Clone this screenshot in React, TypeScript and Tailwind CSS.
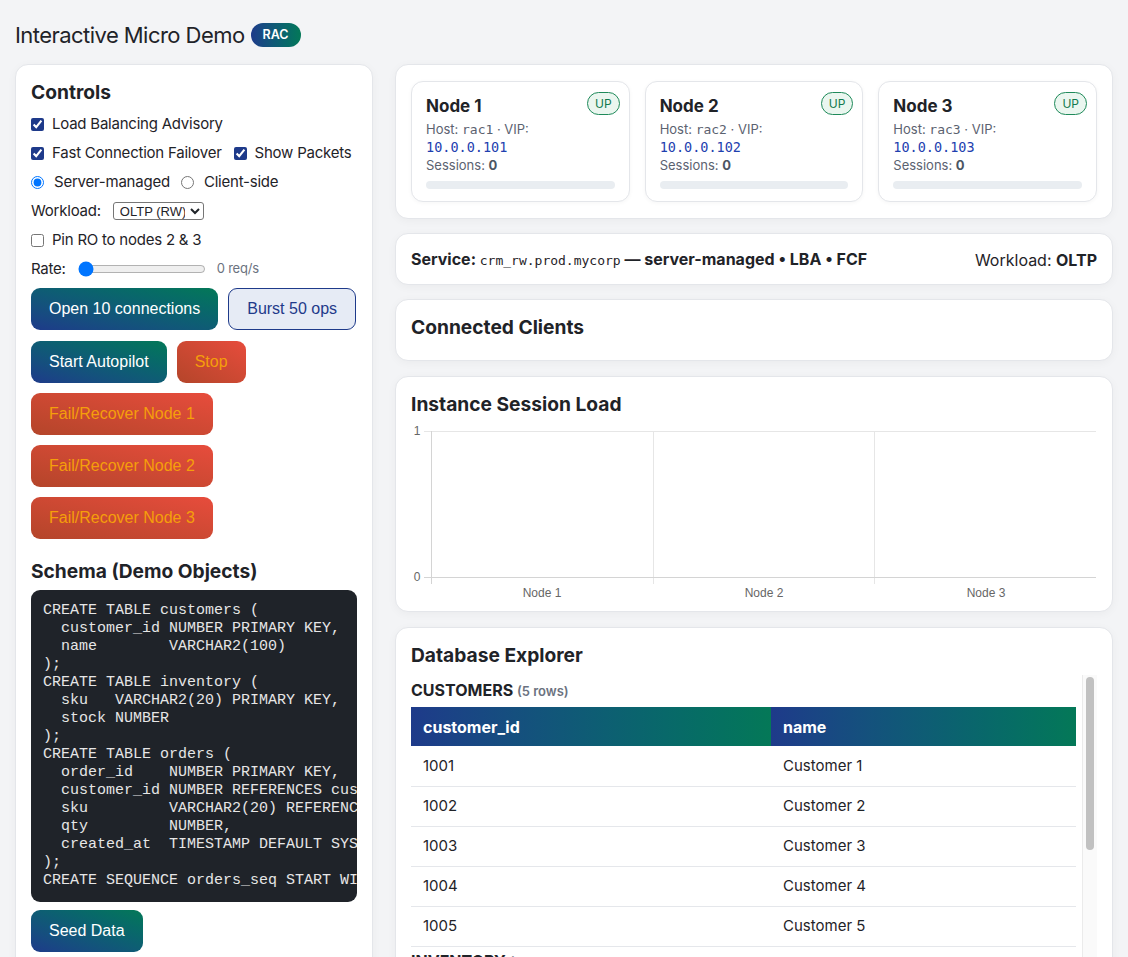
import React from 'react';

const schema = [
  'CREATE TABLE customers (',
  '  customer_id NUMBER PRIMARY KEY,',
  '  name        VARCHAR2(100)',
  ');',
  'CREATE TABLE inventory (',
  '  sku   VARCHAR2(20) PRIMARY KEY,',
  '  stock NUMBER',
  ');',
  'CREATE TABLE orders (',
  '  order_id    NUMBER PRIMARY KEY,',
  '  customer_id NUMBER REFERENCES customers(customer_id),',
  '  sku         VARCHAR2(20) REFERENCES inventory(sku),',
  '  qty         NUMBER,',
  '  created_at  TIMESTAMP DEFAULT SYSTIMESTAMP',
  ');',
  'CREATE SEQUENCE orders_seq START WITH 1;',
];

const nodes = [
  { name: 'Node 1', host: 'rac1', vip: '10.0.0.101' },
  { name: 'Node 2', host: 'rac2', vip: '10.0.0.102' },
  { name: 'Node 3', host: 'rac3', vip: '10.0.0.103' },
];

const customers = [1001, 1002, 1003, 1004, 1005].map((id, i) => ({ id, name: `Customer ${i + 1}` }));
const inventory = [
  { sku: 'SKU-100', stock: 50 },
  { sku: 'SKU-200', stock: 50 },
  { sku: 'SKU-300', stock: 50 },
];

const blueBtn =
  'h-[42px] px-[18px] rounded-[9px] bg-linear-to-tr from-[#1e3a8a] to-[#047857] text-white text-[16px] font-["Liberation_Sans",Arial,sans-serif] whitespace-nowrap';
const redBtn =
  'h-[42px] px-[18px] rounded-[9px] bg-linear-to-tr from-[#b4452a] to-[#e74c3c] text-[#f59e0b] text-[16px] font-["Liberation_Sans",Arial,sans-serif] whitespace-nowrap';

function SessionChart() {
  const gridX = [20, 241.7, 463.3];
  const centers = [131, 353, 575];
  return (
    <svg width="686" height="182" className="block">
      <line x1="13" x2="685" y1="10.5" y2="10.5" stroke="#e6e6e6" />
      {gridX.map((x, i) => (
        <line key={x} x1={Math.round(x) + 0.5} x2={Math.round(x) + 0.5} y1="10" y2="163" stroke={i === 0 ? '#d4d4d4' : '#e6e6e6'} />
      ))}
      <line x1="13" x2="685" y1="156.5" y2="156.5" stroke="#d4d4d4" />
      <text x="6" y="14" fontSize="12" fill="#666" textAnchor="middle" fontFamily="Liberation Sans, Arial, sans-serif">1</text>
      <text x="6" y="160" fontSize="12" fill="#666" textAnchor="middle" fontFamily="Liberation Sans, Arial, sans-serif">0</text>
      {centers.map((cx, i) => (
        <text key={cx} x={cx} y="176" fontSize="12" fill="#666" textAnchor="middle" fontFamily="Liberation Sans, Arial, sans-serif">
          Node {i + 1}
        </text>
      ))}
    </svg>
  );
}

export default function App() {
  const card = 'bg-white border border-[#e4e6ea] rounded-[13px] shadow-[0_2px_10px_rgba(0,0,0,0.04)]';

  return (
    <div className="min-h-screen bg-[#f3f4f6] px-[15px] pt-[19px] pb-6 font-['Inter',sans-serif] text-[#1f2328]">
      <header className="flex items-center gap-[6px] h-[32px] mb-[13px]">
        <h1 className="text-[22px] leading-[32px] font-normal tracking-[-0.025em]">Interactive Micro Demo</h1>
        <span className="h-[24px] px-[12px] rounded-full bg-linear-to-r from-[#1e3a8a] to-[#047857] text-white text-[12.5px] font-semibold leading-[24px]">
          RAC
        </span>
      </header>

      <div className="grid grid-cols-[358px_1fr] gap-[22px] items-start">
        {/* left: controls */}
        <aside className={`${card} p-[15px] pb-[40px]`}>
          <h2 className="text-[19.2px] leading-6 font-bold mb-[9px]">Controls</h2>
          <div className="flex flex-col gap-[7px] text-[15px] tracking-[-0.015em]">
            <label className="h-[22px] flex items-center gap-2">
              <input type="checkbox" defaultChecked className="w-[13px] h-[13px] accent-[#1e3a8a]" />
              Load Balancing Advisory
            </label>
            <div className="h-[22px] flex items-center gap-3">
              <label className="flex items-center gap-2">
                <input type="checkbox" defaultChecked className="w-[13px] h-[13px] accent-[#1e3a8a]" />
                Fast Connection Failover
              </label>
              <label className="flex items-center gap-2">
                <input type="checkbox" defaultChecked className="w-[13px] h-[13px] accent-[#1e3a8a]" />
                Show Packets
              </label>
            </div>
            <div className="h-[22px] flex items-center gap-[11px]">
              <label className="flex items-center gap-[10px]">
                <input type="radio" name="mode" defaultChecked className="w-[13px] h-[13px]" />
                Server-managed
              </label>
              <label className="flex items-center gap-[10px]">
                <input type="radio" name="mode" className="w-[13px] h-[13px]" />
                Client-side
              </label>
            </div>
            <div className="h-[22px] flex items-center gap-3">
              <span>Workload:</span>
              <select className="w-[91px] h-[18px] border border-[#767676] rounded-[3px] text-[13px] leading-[16px] px-[2px] tracking-normal font-['Liberation_Sans',Arial,sans-serif] bg-white">
                <option>OLTP (RW)</option>
              </select>
            </div>
            <label className="h-[22px] flex items-center gap-2">
              <input type="checkbox" className="w-[13px] h-[13px] accent-[#1e3a8a]" />
              Pin RO to nodes 2 &amp; 3
            </label>
            <div className="h-[22px] flex items-center">
              <span>Rate:</span>
              <input type="range" min={0} max={100} defaultValue={0} className="ml-3 w-[128px]" />
              <span className="ml-[11px] text-[13px] text-[#6b7280]">0 req/s</span>
            </div>
          </div>

          <div className="mt-[8px] flex flex-col gap-[10px]">
            <div className="flex gap-[10px] mb-px">
              <button className={blueBtn}>Open 10 connections</button>
              <button className="h-[42px] px-[18px] rounded-[9px] border border-[#1e3a8a] bg-[#e6ebf5] text-[#1e3a8a] text-[16px] font-['Liberation_Sans',Arial,sans-serif]">
                Burst 50 ops
              </button>
            </div>
            <div className="flex gap-[10px]">
              <button className={blueBtn}>Start Autopilot</button>
              <button className={redBtn}>Stop</button>
            </div>
            {[1, 2, 3].map(n => (
              <div key={n}>
                <button className={redBtn}>Fail/Recover Node {n}</button>
              </div>
            ))}
          </div>

          <h2 className="mt-[20px] text-[19.2px] leading-6 font-bold">Schema (Demo Objects)</h2>
          <pre className="mt-[7px] p-3 rounded-[9px] bg-[#1f2329] text-[#e6e6e6] text-[15px] leading-[18px] font-['Liberation_Mono','Courier_New',monospace] overflow-hidden">
            {schema.join('\n')}
          </pre>
          <button className={`${blueBtn} mt-2`}>Seed Data</button>
        </aside>

        {/* right column */}
        <main className="flex flex-col gap-[14px]">
          <section className={`${card} px-[15px] py-4`}>
            <div className="grid grid-cols-3 gap-[15px]">
              {nodes.map(n => (
                <div key={n.name} className="relative border border-[#e4e6ea] rounded-[12px] bg-white px-[14px] pt-[13px] pb-[12px] shadow-[0_1px_4px_rgba(0,0,0,0.04)]">
                  <span className="absolute top-[10px] right-[9px] h-[23px] px-[7px] rounded-full border border-[#1f8a5a] bg-[#eaf6ef] text-[#127a4e] text-[12px] leading-[21px]">
                    UP
                  </span>
                  <div className="text-[17px] leading-[22px] font-bold">{n.name}</div>
                  <div className="mt-[3px] text-[13px] leading-[18px] text-[#5b6270]">
                    <div>
                      Host: <span className="font-['DejaVu_Sans_Mono',monospace] text-[13px]">{n.host}</span> · VIP:
                    </div>
                    <div className="font-['DejaVu_Sans_Mono',monospace] text-[13.5px] text-[#1e40af] leading-[17px]">{n.vip}</div>
                    <div>
                      Sessions: <b className="text-[#4b5563]">0</b>
                    </div>
                  </div>
                  <div className="mt-[7px] h-2 rounded-full bg-[#e9edf1]" />
                </div>
              ))}
            </div>
          </section>

          <section className={`${card} px-[15px] pt-[15px] pb-[13px] flex items-center justify-between text-[16px] leading-[21px]`}>
            <div className="font-bold">
              Service: <span className="font-['DejaVu_Sans_Mono',monospace] text-[13px] font-normal">crm_rw.prod.mycorp</span> — server-managed • LBA • FCF
            </div>
            <div>
              Workload: <b>OLTP</b>
            </div>
          </section>

          <section className={`${card} px-[15px] pt-[15px] pb-[21px]`}>
            <h3 className="text-[19.2px] leading-6 font-bold">Connected Clients</h3>
          </section>

          <section className={`${card} mt-px px-[15px] pt-[15px] pb-[8px]`}>
            <h3 className="text-[19.2px] leading-6 font-bold">Instance Session Load</h3>
            <div className="mt-[5px]">
              <SessionChart />
            </div>
          </section>

          <section className={`${card} mt-px px-[15px] pt-[15px] pb-4`}>
            <h3 className="text-[19.2px] leading-6 font-bold">Database Explorer</h3>
            <div className="mt-[8px] h-[340px] flex gap-[6px] overflow-hidden">
              <div className="flex-1 pt-[5px]">
                <div className="leading-[20px] text-[16px] font-bold">
                  CUSTOMERS <span className="text-[13px] font-semibold text-[#6b7280]">(5 rows)</span>
                </div>
                <table className="mt-[6px] w-full border-collapse text-[15px]">
                  <thead>
                    <tr>
                      <th className="w-[360px] h-[39px] px-3 text-left text-[16px] text-white font-bold bg-linear-to-r from-[#1e3a8a] to-[#047857]">customer_id</th>
                      <th className="h-[39px] px-3 text-left text-[16px] text-white font-bold bg-linear-to-r from-[#1e3a8a] to-[#047857]">name</th>
                    </tr>
                  </thead>
                  <tbody>
                    {customers.map(c => (
                      <tr key={c.id} className="border-b border-[#e5e7eb]">
                        <td className="h-[40px] px-3">{c.id}</td>
                        <td className="h-[40px] px-3">{c.name}</td>
                      </tr>
                    ))}
                  </tbody>
                </table>
                <div className="mt-[4px] leading-[20px] text-[16px] font-bold">
                  INVENTORY <span className="text-[13px] font-semibold text-[#6b7280]">(3 rows)</span>
                </div>
                <table className="mt-[6px] w-full border-collapse text-[15px]">
                  <thead>
                    <tr>
                      <th className="w-[360px] h-[39px] px-3 text-left text-[16px] text-white font-bold bg-linear-to-r from-[#1e3a8a] to-[#047857]">sku</th>
                      <th className="h-[39px] px-3 text-left text-[16px] text-white font-bold bg-linear-to-r from-[#1e3a8a] to-[#047857]">stock</th>
                    </tr>
                  </thead>
                  <tbody>
                    {inventory.map(r => (
                      <tr key={r.sku} className="border-b border-[#e5e7eb]">
                        <td className="h-[40px] px-3">{r.sku}</td>
                        <td className="h-[40px] px-3">{r.stock}</td>
                      </tr>
                    ))}
                  </tbody>
                </table>
              </div>
              {/* scrollbar */}
              <div className="w-[15px] border-l border-[#ebebeb] bg-[#fafafa] pt-[2px] flex justify-center">
                <div className="w-[8px] h-[173px] rounded-full bg-[#c1c1c1]" />
              </div>
            </div>
          </section>
        </main>
      </div>
    </div>
  );
}
